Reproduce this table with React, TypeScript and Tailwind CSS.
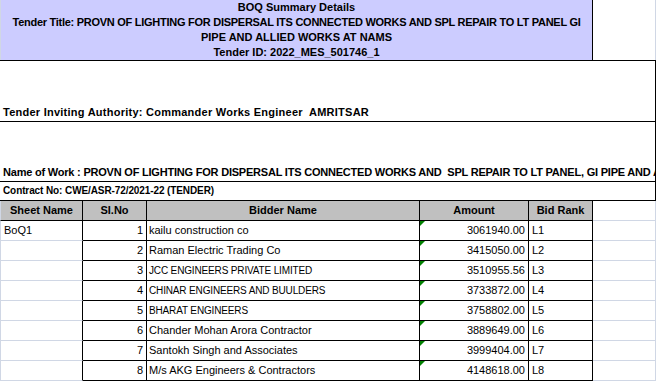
import React from "react";

const rows = [
  { sheet: "BoQ1", no: 1, name: "kailu construction co", amt: "3061940.00", rank: "L1", caps: false },
  { sheet: "", no: 2, name: "Raman Electric Trading Co", amt: "3415050.00", rank: "L2", caps: false },
  { sheet: "", no: 3, name: "JCC ENGINEERS PRIVATE LIMITED", amt: "3510955.56", rank: "L3", caps: true },
  { sheet: "", no: 4, name: "CHINAR ENGINEERS AND BUULDERS", amt: "3733872.00", rank: "L4", caps: true },
  { sheet: "", no: 5, name: "BHARAT ENGINEERS", amt: "3758802.00", rank: "L5", caps: true },
  { sheet: "", no: 6, name: "Chander Mohan Arora Contractor", amt: "3889649.00", rank: "L6", caps: false },
  { sheet: "", no: 7, name: "Santokh Singh and Associates", amt: "3999404.00", rank: "L7", caps: false },
  { sheet: "", no: 8, name: "M/s AKG Engineers & Contractors", amt: "4148618.00", rank: "L8", caps: false },
];

export default function App() {
  return (
    <div
      className="w-[657px] h-[381px] bg-white text-black text-[11px] leading-[13px] overflow-hidden"
      style={{ fontFamily: '"Liberation Sans", Arial, sans-serif' }}
    >
      {/* Top header */}
      <div className="flex h-[60px]">
        <div className="w-[593px] bg-[#ccccff] border-r border-black border-l border-l-[#d0d7e5] flex flex-col font-bold">
          <div className="h-[15px] flex items-center justify-center">BOQ Summary Details</div>
          <div className="h-[15px] flex items-center justify-center whitespace-nowrap tracking-[-0.27px]">
            Tender Title: PROVN OF LIGHTING FOR DISPERSAL ITS CONNECTED WORKS AND SPL REPAIR TO LT PANEL GI
          </div>
          <div className="h-[15px] flex items-center justify-center">PIPE AND ALLIED WORKS AT NAMS</div>
          <div className="h-[15px] flex items-center justify-center">Tender ID: 2022_MES_501746_1</div>
        </div>
        <div className="w-[63px] border-r border-[#d0d7e5]" />
      </div>

      {/* Info box */}
      <div className="w-[656px] border-t border-r border-black font-bold">
        <div className="h-[61px] border-b border-black flex items-end pl-[3px] pb-[2px] whitespace-pre tracking-[0.25px]">
          Tender Inviting Authority: Commander Works Engineer  AMRITSAR
        </div>
        <div className="h-[60px] border-b border-black flex items-end pl-[3px] pb-[2px] whitespace-pre overflow-hidden tracking-[-0.21px]">
          Name of Work : PROVN OF LIGHTING FOR DISPERSAL ITS CONNECTED WORKS AND  SPL REPAIR TO LT PANEL, GI PIPE AND ALLIED WORKS AT NAMS
        </div>
        <div className="h-[19px] border-b border-black flex items-end pl-[3px] pb-[3px] whitespace-pre text-[10px] leading-[12px] tracking-[-0.1px]">
          Contract No: CWE/ASR-72/2021-22 (TENDER)
        </div>
      </div>

      {/* Table */}
      <div className="grid grid-cols-[83px_64px_273px_109px_64px_63px]">
        <div className="h-[20px] bg-[#c0c0c0] border-b border-r border-black border-l border-l-[#d0d7e5] flex items-center justify-center font-bold">
          Sheet Name
        </div>
        <div className="h-[20px] bg-[#c0c0c0] border-b border-r border-black flex items-center justify-center font-bold">
          SI.No
        </div>
        <div className="h-[20px] bg-[#c0c0c0] border-b border-r border-black flex items-center justify-center font-bold">
          Bidder Name
        </div>
        <div className="h-[20px] bg-[#c0c0c0] border-b border-r border-black flex items-center justify-center font-bold">
          Amount
        </div>
        <div className="h-[20px] bg-[#c0c0c0] border-b border-r border-black flex items-center justify-center font-bold">
          Bid Rank
        </div>
        <div className="h-[20px] border-b border-r border-[#d0d7e5]" />
        {rows.map((r) => (
          <React.Fragment key={r.no}>
            <div className="h-[20px] border-b border-[#d0d7e5] border-l border-r border-r-black flex items-center pl-[3px]">
              {r.sheet}
            </div>
            <div className="h-[20px] border-b border-r border-black flex items-center justify-end pr-[3px]">
              {r.no}
            </div>
            <div
              className={
                r.caps
                  ? "h-[20px] border-b border-r border-black flex items-center pl-[2px] whitespace-nowrap text-[10px] tracking-[-0.15px]"
                  : "h-[20px] border-b border-r border-black flex items-center pl-[2px] whitespace-nowrap"
              }
            >
              {r.name}
            </div>
            <div className="relative h-[20px] border-b border-r border-black flex items-center justify-end pr-[3px]">
              <svg className="absolute left-0 top-0" width="5" height="5" viewBox="0 0 5 5">
                <polygon points="0,0 5,0 0,5" fill="#008000" />
              </svg>
              {r.amt}
            </div>
            <div className="h-[20px] border-b border-r border-black flex items-center pl-[3px]">
              {r.rank}
            </div>
            <div className="h-[20px] border-b border-r border-[#d0d7e5]" />
          </React.Fragment>
        ))}
      </div>
    </div>
  );
}
